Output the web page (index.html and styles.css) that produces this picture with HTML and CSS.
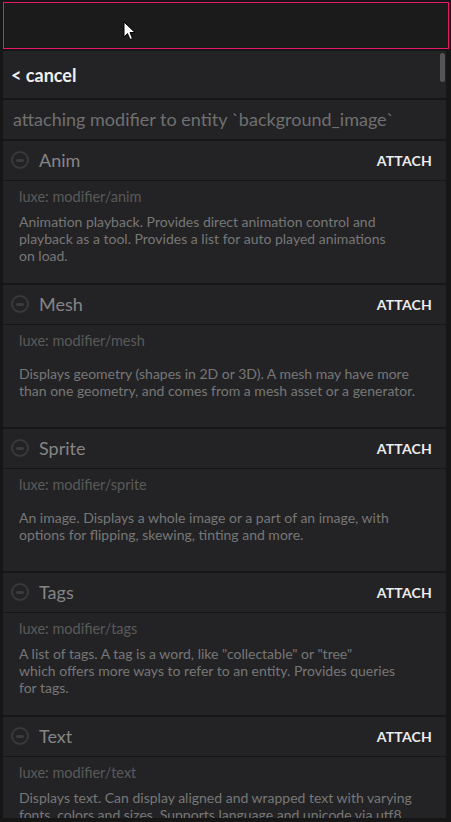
FILE: index.html
```html
<!DOCTYPE html>
<html>
<head>
<meta charset="utf-8">
<link rel="stylesheet" href="styles.css">
</head>
<body>
<div class="app">
  <div class="search"></div>
  <div class="panel">
    <div class="row cancel">&lt; cancel</div>
    <div class="row subtitle">attaching modifier to entity `background_image`</div>

    <div class="card">
      <div class="head">
        <span class="icon"></span>
        <span class="title">Anim</span>
        <span class="attach">ATTACH</span>
      </div>
      <div class="body">
        <div class="path">luxe: modifier/anim</div>
        <div class="desc"><p>Animation playback. Provides direct animation control and<br>playback as a tool. Provides a list for auto played animations<br>on load.</p></div>
      </div>
    </div>

    <div class="card">
      <div class="head">
        <span class="icon"></span>
        <span class="title">Mesh</span>
        <span class="attach">ATTACH</span>
      </div>
      <div class="body">
        <div class="path">luxe: modifier/mesh</div>
        <div class="desc"><p>Displays geometry (shapes in 2D or 3D). A mesh may have more<br>than one geometry, and comes from a mesh asset or a generator.</p></div>
      </div>
    </div>

    <div class="card">
      <div class="head">
        <span class="icon"></span>
        <span class="title">Sprite</span>
        <span class="attach">ATTACH</span>
      </div>
      <div class="body">
        <div class="path">luxe: modifier/sprite</div>
        <div class="desc"><p>An image. Displays a whole image or a part of an image, with<br>options for flipping, skewing, tinting and more.</p></div>
      </div>
    </div>

    <div class="card">
      <div class="head">
        <span class="icon"></span>
        <span class="title">Tags</span>
        <span class="attach">ATTACH</span>
      </div>
      <div class="body">
        <div class="path">luxe: modifier/tags</div>
        <div class="desc"><p>A list of tags. A tag is a word, like "collectable" or "tree"<br>which offers more ways to refer to an entity. Provides queries<br>for tags.</p></div>
      </div>
    </div>

    <div class="card">
      <div class="head">
        <span class="icon"></span>
        <span class="title">Text</span>
        <span class="attach">ATTACH</span>
      </div>
      <div class="body">
        <div class="path">luxe: modifier/text</div>
        <div class="desc"><p>Displays text. Can display aligned and wrapped text with varying<br>fonts, colors and sizes. Supports language and unicode via utf8<br>encoding.</p></div>
      </div>
    </div>

    <div class="thumb"></div>
  </div>
  <svg class="cursor" width="14" height="20" viewBox="0 0 14 20">
    <path d="M1 1 L1 16 L4.5 12.5 L7 18.5 L9.5 17.5 L7 11.5 L12 11.5 Z" fill="#fff" stroke="#000" stroke-width="1"/>
  </svg>
</div>
</body>
</html>
```

FILE: styles.css
```css
* { box-sizing: border-box; }
html, body {
  margin: 0;
  padding: 0;
  background: #161616;
  font-family: Lato, "Open Sans", sans-serif;
}
.app {
  position: relative;
  width: 451px;
  height: 822px;
  padding: 2px 2px 0 3px;
  display: flex;
  flex-direction: column;
  gap: 2px;
  overflow: hidden;
}
.search {
  height: 47px;
  border: 1px solid #e8186a;
  background: #1b1b1b;
  flex: none;
}
.panel {
  position: relative;
  height: 767px;
  margin-right: 3px;
  overflow: hidden;
  display: flex;
  flex-direction: column;
  gap: 2px;
  flex: none;
}
.row {
  background: #232325;
  flex: none;
}
.cancel {
  height: 47px;
  display: flex;
  align-items: center;
  padding-left: 8px;
  font-weight: 700;
  font-size: 18px;
  color: #f0f0f0;
}
.subtitle {
  height: 39px;
  display: flex;
  align-items: center;
  padding-left: 10px;
  padding-bottom: 1px;
  font-size: 18px;
  color: #707070;
}
.card {
  flex: none;
  background: #232325;
}
.head {
  height: 40px;
  display: flex;
  align-items: center;
  padding-left: 8px;
  padding-right: 14px;
  padding-bottom: 1px;
  border-bottom: 1px solid #161616;
}
.icon {
  width: 18px;
  height: 18px;
  border: 2px solid #3a3a3c;
  border-radius: 50%;
  display: flex;
  align-items: center;
  justify-content: center;
  flex: none;
}
.icon::before {
  content: "";
  width: 8px;
  height: 3px;
  border-radius: 1px;
  background: #3a3a3c;
}
.title {
  margin-left: 10px;
  font-size: 18px;
  color: #858585;
  flex: 1;
}
.attach {
  font-weight: 700;
  font-size: 14px;
  color: #ececec;
  letter-spacing: 0.2px;
}
.body {
  height: 102px;
  padding: 7px 0 13px 16px;
  display: flex;
  flex-direction: column;
}
.path {
  height: 18px;
  line-height: 18px;
  font-size: 14.5px;
  color: #5a5a5a;
}
.desc {
  flex: 1;
  display: flex;
  align-items: center;
}
.desc p {
  margin: 0;
  font-size: 14px;
  line-height: 17px;
  color: #777;
  white-space: nowrap;
}
.thumb {
  position: absolute;
  top: 2px;
  right: 1px;
  width: 5px;
  height: 29px;
  border-radius: 3px;
  background: #555;
}
.cursor {
  position: absolute;
  left: 123px;
  top: 21px;
}
```
